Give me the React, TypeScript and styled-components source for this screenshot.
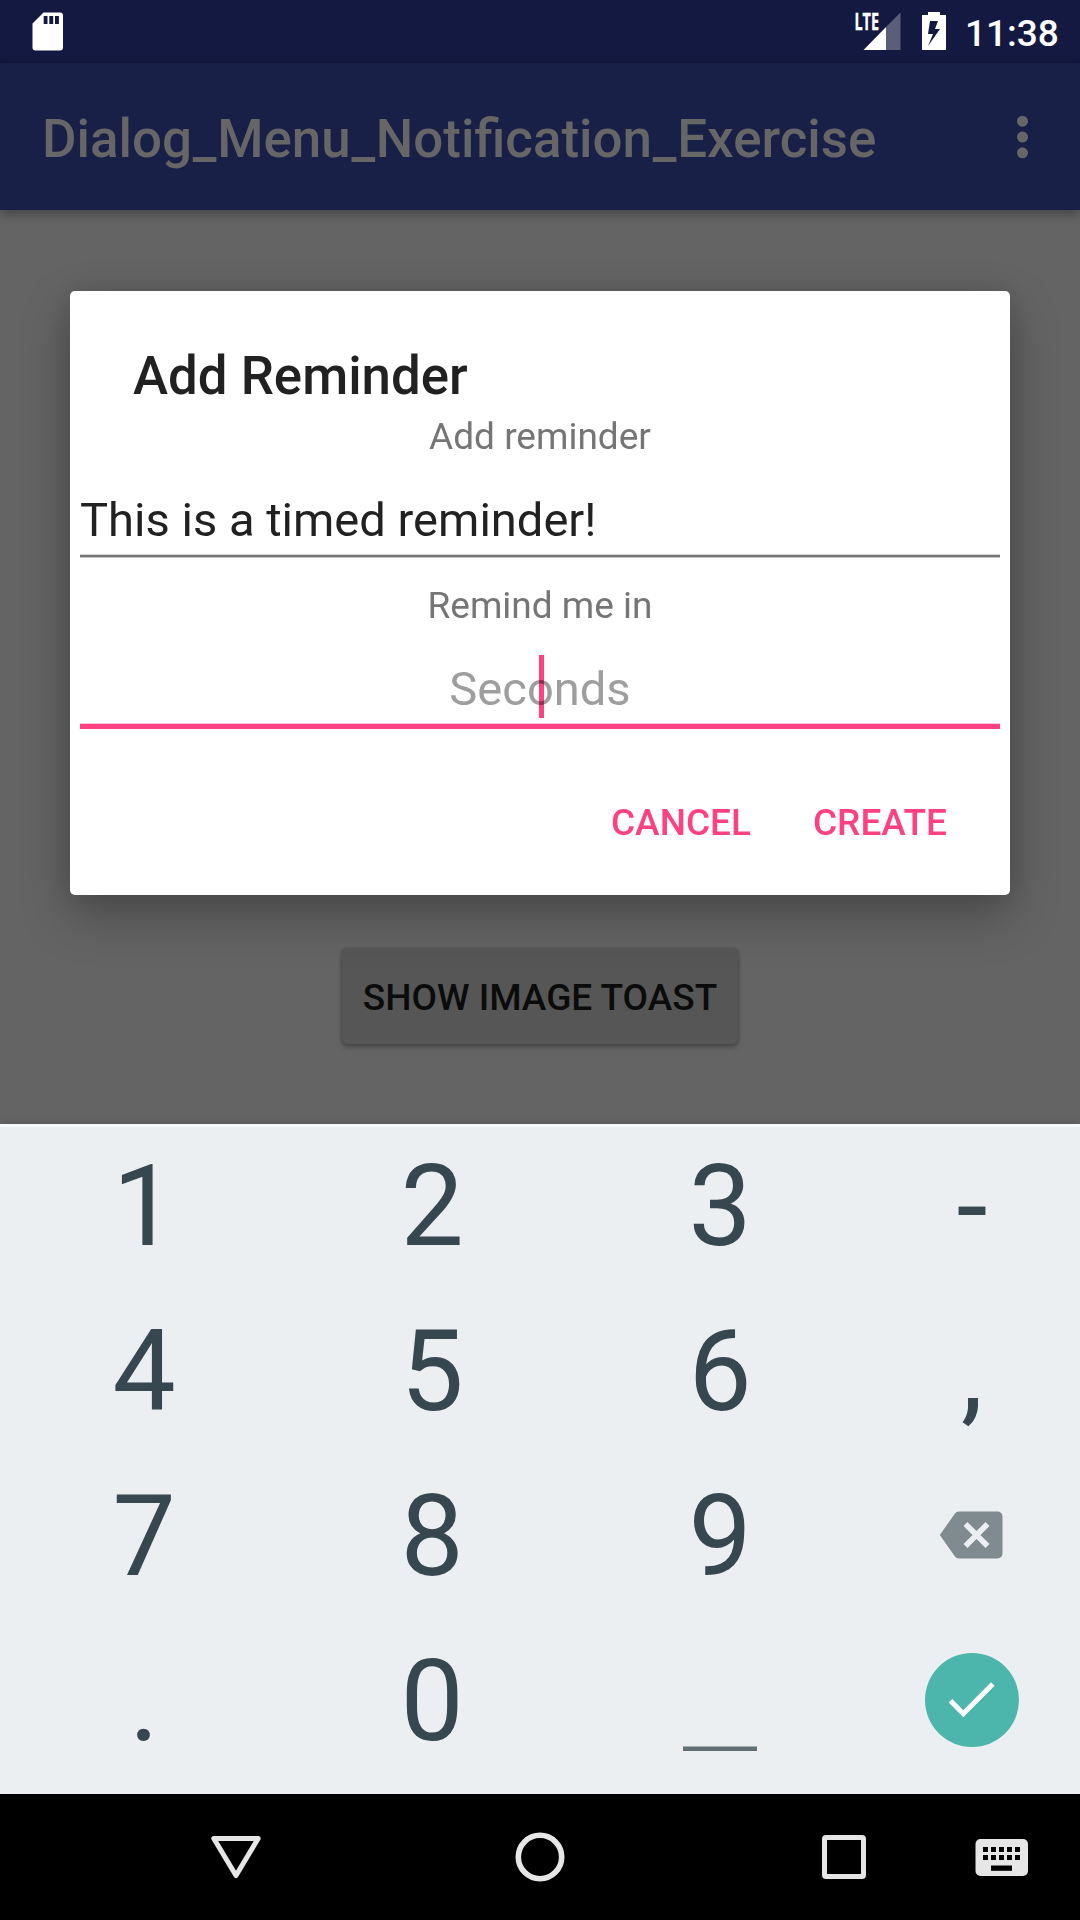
import React from "react";
import styled, { createGlobalStyle } from "styled-components";

const Global = createGlobalStyle`
  body { margin: 0; font-family: Roboto, "Liberation Sans", sans-serif; }
  * { box-sizing: border-box; }
`;

const Screen = styled.div`
  position: relative;
  width: 1080px;
  height: 1920px;
  display: flex;
  flex-direction: column;
  overflow: hidden;
  background: #646464;
`;

const StatusBar = styled.header`
  height: 63px;
  flex: none;
  display: flex;
  align-items: center;
  justify-content: space-between;
  padding: 0 20px 0 28px;
  background: #131940;
`;

const StatusIcons = styled.div`
  display: flex;
  align-items: center;
`;

const Clock = styled.span`
  width: 95px;
  margin-left: 16px;
  padding-top: 4px;
  font-size: 37px;
  line-height: 44px;
  font-weight: 500;
  color: #fff;
  white-space: nowrap;
`;

const Icon = styled.svg`
  display: block;
  flex: none;
`;

const Toolbar = styled.div`
  position: relative;
  z-index: 1;
  height: 147px;
  flex: none;
  display: flex;
  align-items: center;
  justify-content: space-between;
  padding: 0 42px;
  background: #192048;
  box-shadow: 0 4px 10px rgba(0, 0, 0, 0.32);
`;

const AppTitle = styled.h1`
  margin: 0;
  padding-top: 5px;
  font-size: 52.9px;
  line-height: 62px;
  font-weight: 500;
  color: #666;
`;

const Underscore = styled.span`
  margin: 0 0.75px;
`;

const Content = styled.main`
  height: 914px;
  flex: none;
  display: flex;
  flex-direction: column;
  align-items: center;
  justify-content: flex-end;
  padding-bottom: 80px;
`;

const ToastButton = styled.button`
  width: 396px;
  height: 96px;
  padding: 3px 0 0;
  border: 0;
  border-radius: 5px;
  background: #565656;
  color: #0b0b0b;
  font: 500 37px/44px Roboto, sans-serif;
  box-shadow: 0 3px 5px rgba(0, 0, 0, 0.3), 0 0 3px rgba(0, 0, 0, 0.15);
`;

const Dialog = styled.section`
  position: absolute;
  z-index: 2;
  left: 70px;
  top: 291px;
  width: 940px;
  height: 604px;
  display: flex;
  flex-direction: column;
  padding: 53px 10px 0;
  border-radius: 5px;
  background: #fff;
  box-shadow: 0 20px 50px rgba(0, 0, 0, 0.27), 0 0 30px rgba(0, 0, 0, 0.12);
`;

const DialogTitle = styled.h2`
  margin: 0;
  padding-left: 53px;
  font-size: 52.8px;
  line-height: 64px;
  font-weight: 500;
  color: #212121;
`;

const Label = styled.label<{ $top: number }>`
  margin-top: ${(p) => p.$top}px;
  font-size: 37px;
  line-height: 44px;
  text-align: center;
  color: #757575;
`;

const Field = styled.div<{ $top: number; $active?: boolean }>`
  position: relative;
  height: ${(p) => (p.$active ? 74 : 67)}px;
  margin-top: ${(p) => p.$top}px;
  padding-top: ${(p) => (p.$active ? 6 : 2)}px;
  font-size: 47.1px;
  line-height: 56px;
  text-align: ${(p) => (p.$active ? "center" : "left")};
  color: ${(p) => (p.$active ? "#9e9e9e" : "#212121")};
  border-bottom: ${(p) => (p.$active ? "5px solid #ff4081" : "2px solid #757575")};
  box-shadow: ${(p) =>
    p.$active ? "inset 0 -1px 0 #ffc9da" : "inset 0 -1px 0 #d6d6d6, 0 1px 0 #c4c4c4"};
`;

const Caret = styled.span`
  position: absolute;
  left: 459px;
  top: 0;
  width: 5px;
  height: 63px;
  background: #ff4081;
  mix-blend-mode: multiply;
`;

const Actions = styled.div`
  display: flex;
  justify-content: flex-end;
  gap: 62px;
  margin-top: 72px;
  padding-right: 53px;
`;

const ActionButton = styled.button`
  padding: 0;
  border: 0;
  background: none;
  color: #ff4081;
  font: 500 37px/44px Roboto, sans-serif;
`;

const Keyboard = styled.div`
  position: relative;
  z-index: 3;
  height: 670px;
  flex: none;
  display: grid;
  grid-template-columns: repeat(3, 288px) 216px;
  grid-template-rows: 164px repeat(3, 165px);
  background: #ebeff2;
  box-shadow: inset 0 3px 0 #f7f8f9, 0 -1px 8px rgba(0, 0, 0, 0.12);
`;

const Key = styled.div<{ $glyph: boolean }>`
  display: flex;
  align-items: center;
  justify-content: center;
  padding-top: ${(p) => (p.$glyph ? 3 : 0)}px;
  font-size: 112.5px;
  line-height: 132px;
  color: #37474f;

  &:nth-child(-n + 4) {
    padding-top: 2px;
  }
`;

const BackspaceIcon = styled(Icon)`
  margin: 0 2px 2px 0;
`;

const DoneIcon = styled(Icon)`
  margin-bottom: 1px;
`;

const NavBar = styled.nav`
  height: 126px;
  flex: none;
  display: flex;
  align-items: center;
  padding-left: 172px;
  background: #000;
`;

const NavSlot = styled.div<{ $w: number; $inset?: number }>`
  width: ${(p) => p.$w}px;
  padding-left: ${(p) => p.$inset ?? 0}px;
  display: flex;
  justify-content: center;
`;

const Backspace = () => (
  <BackspaceIcon width="64" height="48" viewBox="0 0 64 48">
    <path fill="#808b8f" d="M20 .5h38.500a5 5 0 0 1 5 5v37a5 5 0 0 1-5 5H20a5 5 0 0 1-4.200-2.300L.8 24 15.800 2.800A5 5 0 0 1 20 .5Z" />
    <path stroke="#ebeff2" strokeWidth="5.600" d="M26.500 13l22 22M48.500 13l-22 22" />
  </BackspaceIcon>
);

const Done = () => (
  <DoneIcon width="94" height="94" viewBox="0 0 94 94">
    <circle cx="47" cy="47" r="47" fill="#4db6ac" />
    <path fill="none" stroke="#fff" strokeWidth="5" d="M25.500 47.700 38.300 60.700 67.800 30.900" />
  </DoneIcon>
);

const Space = () => (
  <Icon width="74" height="101" viewBox="0 0 74 101">
    <rect y="96.500" width="74" height="4.500" fill="#5f6f74" />
  </Icon>
);

const keys: React.ReactNode[] = [
  "1", "2", "3", "-",
  "4", "5", "6", ",",
  "7", "8", "9", <Backspace />,
  ".", "0", <Space />, <Done />,
];

export default function App() {
  return (
    <>
      <Global />
      <Screen>
        <StatusBar>
          <Icon width="40" height="63" viewBox="28 0 40 63">
            <path
              fill="#fff"
              fillRule="evenodd"
              d="M43.500 12.500H60a3 3 0 0 1 3 3V47.500a3 3 0 0 1-3 3H35.500a3 3 0 0 1-3-3V23.500ZM43.700 16v8h3.800v-8ZM49.300 16v8h3.900v-8ZM55 16v8h3.900v-8Z"
            />
          </Icon>
          <StatusIcons>
            <Icon width="97" height="63" viewBox="852 0 97 63">
              <text
                x="854.500"
                y="29.500"
                fill="#fff"
                stroke="#fff"
                strokeWidth=".4"
                fontFamily="Open Sans, sans-serif"
                fontWeight="700"
                fontSize="22.500"
                textLength="24.500"
                lengthAdjust="spacingAndGlyphs"
              >
                LTE
              </text>
              <path fill="#fff" fillOpacity=".3" d="M886 27 900.500 12.500V50H886Z" />
              <path fill="#fff" d="M886 27V50H863.500Z" />
              <path
                fill="#fff"
                fillRule="evenodd"
                d="M928 12h12v3h6v35h-24V15h6ZM930 21l-2 13h5l-5 12 12-17h-5l3-8Z"
              />
            </Icon>
            <Clock>11:38</Clock>
          </StatusIcons>
        </StatusBar>
        <Toolbar>
          <AppTitle>
            Dialog<Underscore>_</Underscore>Menu<Underscore>_</Underscore>Notification
            <Underscore>_</Underscore>Exercise
          </AppTitle>
          <Icon width="32" height="48" viewBox="0 0 32 48" fill="#666">
            <circle cx="16.500" cy="8.200" r="5.500" />
            <circle cx="16.500" cy="24" r="5.500" />
            <circle cx="16.500" cy="39.800" r="5.500" />
          </Icon>
        </Toolbar>
        <Content>
          <ToastButton>SHOW IMAGE TOAST</ToastButton>
        </Content>
        <Keyboard>
          {keys.map((k, i) => (
            <Key key={i} $glyph={typeof k === "string"}>
              {k}
            </Key>
          ))}
        </Keyboard>
        <NavBar>
          <NavSlot $w={128}>
            <Icon width="52" height="46" viewBox="210 1834 52 46">
              <path
                fill="none"
                stroke="#e6e6e6"
                strokeWidth="5"
                strokeLinejoin="round"
                d="M213.800 1838.500H258.200L236 1875.500Z"
              />
            </Icon>
          </NavSlot>
          <NavSlot $w={480}>
            <Icon width="52" height="52" viewBox="0 0 52 52">
              <circle cx="26" cy="26" r="21.700" fill="none" stroke="#e6e6e6" strokeWidth="5.600" />
            </Icon>
          </NavSlot>
          <NavSlot $w={128}>
            <Icon width="46" height="46" viewBox="0 0 46 46">
              <rect x="3.500" y="3.500" width="39" height="39" rx="1.500" fill="none" stroke="#e6e6e6" strokeWidth="5" />
            </Icon>
          </NavSlot>
          <NavSlot $w={172} $inset={16}>
            <Icon width="54" height="38" viewBox="0 0 54 38">
              <rect x=".5" y="1" width="52.500" height="37" rx="5" fill="#e6e6e6" />
              {[0, 1, 2, 3, 4].map((c) => (
                <path key={c} d={`M${8 + c * 8} 9h5v5h-5zM${8 + c * 8} 17h5v5h-5z`} />
              ))}
              <path d="M16 27.500h21v5.300h-21z" />
            </Icon>
          </NavSlot>
        </NavBar>
        <Dialog>
          <DialogTitle>Add Reminder</DialogTitle>
          <Label $top={7}>Add reminder</Label>
          <Field $top={31}>This is a timed reminder!</Field>
          <Label $top={27}>Remind me in</Label>
          <Field $top={27} $active>
            Seconds
            <Caret />
          </Field>
          <Actions>
            <ActionButton>CANCEL</ActionButton>
            <ActionButton>CREATE</ActionButton>
          </Actions>
        </Dialog>
      </Screen>
    </>
  );
}
